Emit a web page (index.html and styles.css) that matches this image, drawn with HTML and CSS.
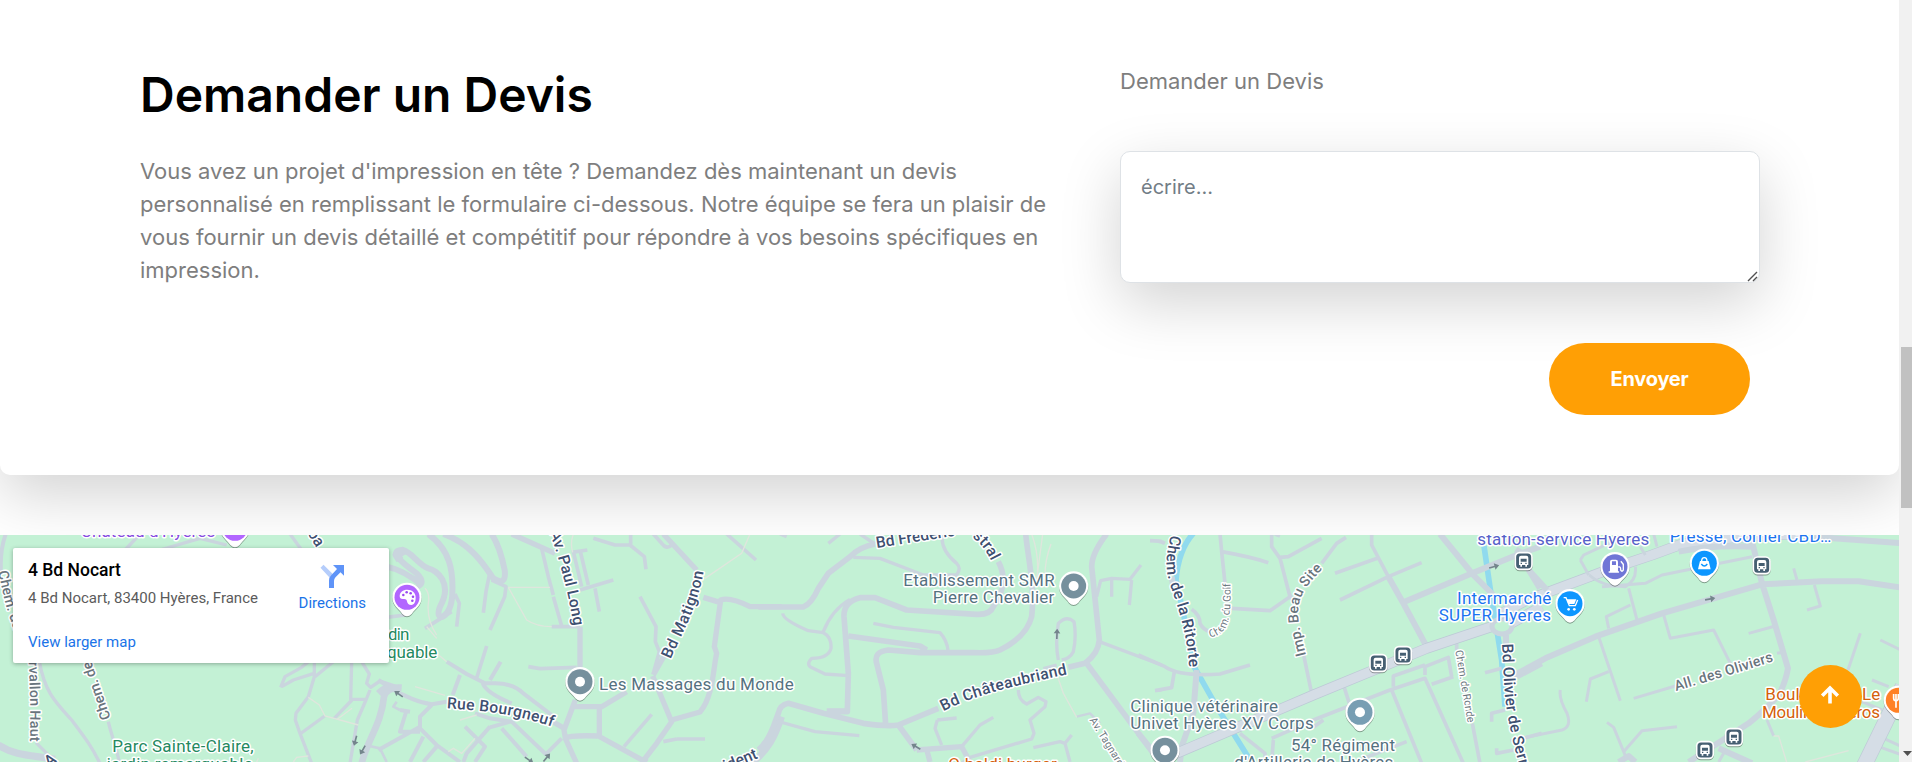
FILE: index.html
```html
<!DOCTYPE html>
<html lang="fr">
<head>
<meta charset="utf-8">
<title>Demander un Devis</title>
<link rel="stylesheet" href="styles.css">
</head>
<body>
<div class="page">
  <main class="content">
    <section class="quote">
      <div class="quote-intro">
        <h2 class="quote-title">Demander un Devis</h2>
        <p class="quote-text">Vous avez un projet d'impression en tête ? Demandez dès maintenant un devis personnalisé en remplissant le formulaire ci-dessous. Notre équipe se fera un plaisir de vous fournir un devis détaillé et compétitif pour répondre à vos besoins spécifiques en impression.</p>
      </div>
      <form class="quote-form">
        <label class="quote-label" for="message">Demander un Devis</label>
        <div class="quote-field">
          <textarea class="quote-input" id="message" placeholder="écrire..."></textarea>
          <svg class="quote-grip" width="11" height="11" viewBox="0 0 11 11"><path d="M1 10L10 1M6 10L10 6" fill="none" stroke="#505050" stroke-width="1.400"/></svg>
        </div>
        <button class="quote-send" type="button">Envoyer</button>
      </form>
    </section>

    <section class="map">
      <svg class="map-canvas" viewBox="0 535 1899 227" width="1899" height="227">
        <defs>
          <g id="pin"><path class="pin-shape" d="M0,-44A44,44 0 0 1 44,0C44,25 26,32 14,50Q0,64 -14,50C-26,32 -44,25 -44,0A44,44 0 0 1 0,-44Z"/><circle r="37.500"/></g>
          <g id="bus"><rect class="bus-frame" x="-25" y="-25" width="50" height="50" rx="13"/><path fill="#fff" fill-rule="evenodd" d="M-14,-10q0,-6 6,-6h16q6,0 6,6v22h-4v5h-5v-5h-10v5h-5v-5h-4zM-9,-7v9h18v-9zM-9,5v4h4v-4zM5,5v4h4v-4z"/></g>
          <g id="way"><path d="M-15,-2.500H2V-10L16,0L2,10V2.500H-15Z"/></g>
          <path id="p-vallon" d="M86,425L91,560L90,670"/>
          <path id="p-chemleft" d="M-6,155C6,200 12,250 42,330"/>
          <path id="p-oa" d="M922,40L960,100"/>
          <path id="p-long" d="M508,38C535,105 565,215 583,330"/>
          <path id="p-matignon" d="M872,418C909,333 957,253 972,145"/>
          <path id="p-bourgneuf" d="M200,565C310,572 400,580 515,620"/>
          <path id="p-mistral1" d="M350,84L580,48"/>
          <path id="p-mistral2" d="M636,52C665,70 680,95 697,130"/>
          <path id="p-chateau" d="M550,574C650,520 800,490 925,462"/>
          <path id="p-tagnard" d="M988,600L1078,745"/>
          <path id="p-ritorte" d="M93,44C80,90 72,140 92,200C125,290 145,370 148,455"/>
          <path id="p-golf" d="M210,352C262,342 275,310 271,183"/>
          <path id="p-beau" d="M498,405C462,265 457,235 555,140"/>
          <path id="p-ronde" d="M946,392L985,620"/>
          <path id="p-olivier" d="M1086,372C1094,500 1085,570 1155,790"/>
          <path id="p-oliviers" d="M492,513C600,480 690,455 795,420"/>
        </defs>

        <rect class="land" x="0" y="535" width="1899" height="227"/>

        <g transform="translate(0 520) scale(.33333)">
          <g class="road">
            <path stroke-width="12" d="M18,40C-8,110 8,150 0,165"/>
            <path stroke-width="10" d="M118,425C135,520 170,550 215,600C260,660 275,680 300,730M325,605C335,650 350,680 358,730"/>
            <path stroke-width="22" d="M-5,675C50,710 100,705 165,718"/>
            <path stroke-width="10" d="M108,668L155,715M375,90L420,42M480,90L600,55L680,75M870,42L905,90"/>
            <path stroke-width="24" d="M1215,90L1190,105L1200,120"/>
            <path stroke-width="10" d="M842,502L855,470L905,442L925,425M845,500L880,480L942,460M943,425V470L925,530L888,580L886,600L900,640L935,730M945,470L1000,425M1055,425L1052,538H1098M1085,425L1108,462L1100,490L1112,502L1140,483L1190,500M1110,510L1098,540L1072,600L1050,730M1056,540L1002,596M974,588L900,642"/>
            <path stroke-width="20" d="M1205,503Q1160,500 1152,530C1145,610 1100,665 1085,730"/>
            <path stroke-width="8" d="M1200,570L1180,560L1190,545M1095,675L1140,685L1160,726"/>
          </g>
          <g class="trail"><path d="M925,532L958,555L975,588L1075,615M1012,598L1056,565M880,726L890,712L925,708M770,726L775,715"/></g>
        </g>

        <g transform="translate(380 520) scale(.33333)">
          <g class="road">
            <path stroke-width="18" d="M145,42C210,90 220,150 217,220C215,300 160,310 180,260C220,190 170,150 145,145C115,135 95,95 68,90C25,90 60,125 110,160Q140,190 110,200M20,140Q70,150 125,195"/>
            <path stroke-width="18" d="M190,42C270,70 310,130 340,175Q380,200 374,150Q360,80 335,42"/>
            <path stroke-width="16" d="M395,42L525,100M600,320V450M586,540L552,630L556,655L590,730M552,655Q570,645 655,648L790,722L830,670L875,605L818,468M820,465L868,380M740,515L665,560H582M658,560V648M875,600L960,576C1000,530 1000,440 1010,400L1003,380L1022,240Q1050,230 1110,260H1205M1022,248L970,232M950,150L850,42M790,726L800,715M552,625L515,603"/>
            <path stroke-width="11" d="M310,130L328,165L318,215L310,278M335,180L378,200L374,230L330,330M320,378L288,480M445,440L480,446L590,442M515,320H600M520,230L545,318M485,85L505,170L520,225M640,55L705,75L750,75L793,110L798,148M752,73V42M700,180L600,210M580,95L605,200M600,90L625,195M575,97L622,90M645,205L658,275M780,230L828,320L826,365L838,395L820,460M820,42L845,70Q860,90 875,75M890,657H975M850,665L890,657M815,583L732,680M1040,42L1128,120M225,222L238,250L230,320M20,292L75,285M135,325L215,275"/>
            <path stroke-width="12" d="M-5,480L25,500Q100,545 155,553L200,545M200,425L260,462L315,490H345Q400,490 430,520L515,585M240,465L218,525M308,490Q320,520 395,550M330,480L362,425M155,555L120,590V620L-5,690M120,625L170,675L240,726M80,570L60,635H120M285,580L330,595L395,605L500,705M330,620L260,700L250,726M365,625L440,710M390,605L330,622M255,620L315,680L285,726M130,650L90,726M500,700L545,655M170,680L130,726M90,575L60,570"/>
            <path stroke-width="20" d="M1205,590C1185,650 1165,690 1115,730M-5,520Q15,500 30,502"/>
          </g>
          <g class="trail"><path d="M580,42Q570,70 578,97M385,202H510M385,202L440,300Q470,320 515,320M975,175L1085,100L1110,42M135,205Q150,220 145,250Q140,300 170,345M170,400L200,425M105,500L195,526M205,695L220,685L245,700L285,655M240,600L290,585M140,320L170,355"/></g>
        </g>

        <g transform="translate(760 520) scale(.33333)">
          <g class="road">
            <path stroke-width="17" d="M-5,261H130Q155,250 175,205L205,160L270,110Q300,80 345,72M715,125Q750,190 700,260Q690,285 650,283L440,270L345,233H300Q250,245 252,290L265,460L262,575H205M797,42C805,120 825,200 815,290Q800,350 720,390Q700,400 640,398H480L385,390Q340,395 350,430L370,510L377,615M1040,42Q995,100 995,140L1018,360Q1015,400 975,430L925,442M980,430L1180,700M535,565L415,615Q380,620 310,610L190,580L85,550Q60,555 55,580L40,620Q20,670 -5,690M415,615L470,690M265,348L480,378L500,390"/>
            <path stroke-width="10" d="M340,310L400,322L540,338Q560,360 564,390M68,280Q70,300 145,332L190,338Q215,350 213,385Q205,415 155,415Q140,430 150,440L195,462L265,467M190,335Q215,270 270,238M280,112L360,115L490,165L590,165Q605,145 590,130Q540,90 547,42M50,603L165,635L298,647M1018,365L1205,435M895,420Q885,370 895,310Q920,285 942,305Q950,350 940,395Q930,415 905,420M1010,230L1022,182L1055,175L1110,178L1143,135M1115,180L1108,255M1055,178V230M850,446L890,435M532,600L590,594M545,675L525,625L532,600M605,680L660,615L700,592M630,712L815,657L822,640L810,600L855,560L858,545L835,532L800,552Q775,540 775,510M820,683L900,665L915,670L930,726M915,670L935,645M630,712L605,730M205,70L240,42M300,42L345,72M60,42L80,50"/>
            <path stroke-width="16" d="M470,690L605,680L630,726M500,688L510,726M200,573H255"/>
            <path stroke-width="7" d="M950,590L990,580L1020,610M1175,62H1205M1185,512H1205"/>
          </g>
          <g class="trail"><path d="M815,42Q840,110 830,180M830,180L848,42M873,72Q855,120 855,165M893,470L910,520L950,592"/></g>
        </g>

        <g transform="translate(1140 520) scale(.33333)">
          <path class="river" d="M160,40Q115,90 108,180L130,280L165,445L230,560L330,720M1032,78L1052,215L1085,420L1095,560"/>
          <g class="road">
            <path stroke-width="11" d="M30,62Q60,62 75,70M-5,405L75,440Q120,470 240,462L330,435M103,455L95,503L45,512M240,42L245,95L255,190M245,95Q330,110 385,128M275,265L390,272L450,230L420,115L395,80V42M420,112L445,110L545,55M450,225L460,250M405,42L420,48M155,268Q180,285 180,310Q190,330 210,335M545,130L590,70L618,52M585,160L712,115M600,240L745,170L845,128M490,400L515,520M612,500L628,550M400,660L395,730M395,655L520,600L750,510L855,475L970,730M755,510L845,730M760,500V468L855,435M855,465V440L925,412L935,470M875,493L940,470M950,370V390M997,610L1020,730M695,42V75L745,170M1055,605V580L1095,570M1035,458L1085,445M1070,685V700L1120,690M1150,655L1205,640M620,735L800,665M-5,405L10,412M300,640L375,700V730M520,622L550,600"/>
            <path stroke-width="18" d="M95,170L100,200M170,450L160,580L125,680L120,726M745,170L790,250L860,380M790,247L1000,158L1130,105L1200,80M900,42L1000,165L1060,225M1130,90L1200,205M1098,345V390M1130,470L1205,430M1140,85L1130,100M-5,640L60,720"/>
          </g>
          <path class="major-edge" d="M110,700L520,525L860,385L1055,320M1095,320L1205,260"/>
          <path class="major" d="M110,700L520,525L860,385L1055,320M1095,320L1205,260"/>
          <ellipse class="roundabout" cx="1086" cy="319" rx="30" ry="23"/>
        </g>

        <g transform="translate(1512 520) scale(.33333)">
          <path class="major-edge" d="M-40,285L45,240L300,145L420,105L510,72Q700,45 870,42"/>
          <path class="major" d="M-40,285L45,240L300,145L420,105L510,72Q700,45 870,42"/>
          <g class="road">
            <path stroke-width="18" d="M-5,472L100,415L250,350L450,280L750,193L930,184H1040L1170,203M500,95Q600,75 720,80M715,42L750,190L785,300L828,445Q820,490 800,525Q760,570 710,610L530,726M900,50L1170,70M620,685L720,730M50,150L105,210M320,726L350,708L370,726"/>
            <path stroke-width="9" d="M205,120L230,165M205,120L215,105L290,70L350,60M232,165Q270,200 340,200Q375,180 370,140M385,80L400,105M425,42L435,80M270,200L400,190L450,165L720,110M350,205L375,300M290,325L283,290L355,255M455,285L475,355L605,330L655,430M260,350L325,542M290,455L235,477L223,545M365,535L490,498M795,400L820,395M845,145L855,180M907,195L925,258L885,270M710,340L790,318M145,510Q140,535 165,580Q180,620 150,630L-5,662M285,607L305,622L335,695L390,632L495,620M335,695L345,720M1105,360L1170,392M1045,340L1008,450M1080,480L1130,500M1050,545L1110,570M1115,655L1170,680M1100,680L1170,705M765,600L785,648M620,726L635,700"/>
          </g>
          <path class="major-edge wide" d="M1172,500L1055,740"/><path class="major wide" d="M1172,500L1055,740"/>
          <g class="trail"><path d="M785,648H800L825,730M880,726L1010,692"/></g>
        </g>

        <g class="ways" transform="scale(.33333)">
          <use href="#way" transform="translate(1196 2082) rotate(215)"/>
          <use href="#way" transform="translate(1066 2222) rotate(105)"/>
          <use href="#way" transform="translate(1088 2250) rotate(120)"/>
          <use href="#way" transform="translate(1640 2273) rotate(-50)"/>
          <use href="#way" transform="translate(1587 2280) rotate(35)"/>
          <use href="#way" transform="translate(2748 2240) rotate(210)"/>
          <use href="#way" transform="translate(3171 1902) rotate(-88)"/>
          <use href="#way" transform="translate(4482 1700) rotate(-15)"/>
          <use href="#way" transform="translate(5130 1797) rotate(-10)"/>
        </g>

        <g class="labels" transform="translate(0 520) scale(.33333)">
          <text class="purple" x="242" y="51" textLength="404">Château d'Hyères</text>
          <text class="green" x="337" y="696" textLength="424">Parc Sainte-Claire,</text>
          <text class="green" x="320" y="749" textLength="438">jardin remarquable</text>
          <text class="green" x="1100" y="360" textLength="128">Jardin</text>
          <text class="green" x="1030" y="414" textLength="282">remarquable</text>
          <text class="minor"><textPath href="#p-chemleft">Chem. du</textPath></text>
          <text class="minor"><textPath href="#p-vallon" textLength="240">rvallon Haut</textPath></text>
          <text class="minor" transform="translate(332 594) rotate(-109)">Chem. de</text>
          <text class="street"><textPath href="#p-oa">oa</textPath></text>
          <text class="street" transform="translate(146 742) rotate(-35)">A</text>
        </g>
        <g class="labels" transform="translate(380 520) scale(.33333)">
          <text x="657" y="511" textLength="584">Les Massages du Monde</text>
          <text class="street"><textPath href="#p-long" textLength="290">Av. Paul Long</textPath></text>
          <text class="street"><textPath href="#p-matignon" textLength="282">Bd Matignon</textPath></text>
          <text class="street"><textPath href="#p-bourgneuf" textLength="323">Rue Bourgneuf</textPath></text>
          <text class="street" text-anchor="end" transform="translate(1135 714) rotate(-22)">Président</text>
        </g>
        <g class="labels" transform="translate(760 520) scale(.33333)">
          <text class="street"><textPath href="#p-mistral1">Bd Frédéric</textPath></text>
          <text class="street"><textPath href="#p-mistral2">stral</textPath></text>
          <text x="430" y="198" textLength="454">Etablissement SMR</text>
          <text x="518" y="250" textLength="365">Pierre Chevalier</text>
          <text class="street"><textPath href="#p-chateau" textLength="389">Bd Châteaubriand</textPath></text>
          <text class="small"><textPath href="#p-tagnard">Av. Tagnard</textPath></text>
          <text class="orange" x="565" y="750" textLength="325">O baldi burger</text>
          <text x="1111" y="575" textLength="443">Clinique vétérinaire</text>
          <text x="1111" y="627" textLength="550">Univet Hyères XV Corps</text>
        </g>
        <g class="labels" transform="translate(1140 520) scale(.33333)">
          <text class="street"><textPath href="#p-ritorte" textLength="408">Chem. de la Ritorte</textPath></text>
          <text class="small"><textPath href="#p-golf" textLength="192">Chem. du Golf</textPath></text>
          <text class="minor"><textPath href="#p-beau" textLength="285">Imp. Beau Site</textPath></text>
          <text class="small"><textPath href="#p-ronde" textLength="220">Chem. de Ronde</textPath></text>
          <text class="street"><textPath href="#p-olivier" textLength="420">Bd Olivier de Serres</textPath></text>
          <text x="453" y="693" textLength="312">54° Régiment</text>
          <text x="283" y="745" textLength="477">d'Artillerie de Hyères</text>
          <text class="indigo" x="1012" y="75" textLength="516">station-service Hyeres</text>
          <text class="blue" x="951" y="251" textLength="283">Intermarché</text>
          <text class="blue" x="896" y="304" textLength="337">SUPER Hyeres</text>
        </g>
        <g class="labels" transform="translate(1512 520) scale(.33333)">
          <text class="blue" x="473" y="67" textLength="485">Presse, Corner CBD…</text>
          <text class="minor"><textPath href="#p-oliviers" textLength="307">All. des Oliviers</textPath></text>
          <text class="orange" x="760" y="541" textLength="345">Boulangerie Le</text>
          <text class="orange" x="750" y="594" textLength="354">Moulin d'Hyèros</text>
        </g>

        <g class="pins" transform="translate(0 520) scale(.33333)">
          <use href="#pin" x="705" y="25" fill="#b266ff"/>
          <use href="#pin" x="1221" y="232" fill="#b266ff"/>
          <path fill="#fff" d="M1222,209c15,0 25,10 25,23c0,14-4,23-13,23c-8,0-12-4-13-11c-1-6-5-8-11-7c-7,1-11-3-11-9c0-11 10-19 23-19z"/>
          <g fill="#9a4af0"><circle cx="1210" cy="225" r="3.800"/><circle cx="1220" cy="217" r="3.800"/><circle cx="1232" cy="220" r="3.800"/><circle cx="1239" cy="230" r="3.800"/><circle cx="1237" cy="242" r="3.800"/></g>
          <use href="#pin" x="1740" y="485" fill="#76909d"/><circle cx="1740" cy="485" r="15" fill="#fff"/>
          <use href="#pin" x="3221" y="198" fill="#76909d"/><circle cx="3221" cy="198" r="15" fill="#fff"/>
          <use href="#pin" x="3495" y="691" fill="#76909d"/><circle cx="3495" cy="691" r="15" fill="#fff"/>
          <use href="#pin" x="4080" y="577" fill="#789eb3"/><circle cx="4080" cy="577" r="15" fill="#fff"/>
          <use href="#pin" x="4845" y="140" fill="#7076d6"/>
          <path fill="#fff" fill-rule="evenodd" d="M4830,154v-29q0-6 6-6h12q6,0 6,6v29h3v4h-31v-4zM4836,124v11h12v-11zM4855,138q9,0 9,9v2q2,4 4,0v-15l-7-9 3-3 8,10v19q-6,10-12,0v-8h-5z"/>
          <use href="#pin" x="4710" y="251" fill="#0d96ff"/>
          <path fill="none" stroke="#fff" stroke-width="4" d="M4691,233h7l10,24h18l7-17"/><path fill="#fff" d="M4700,238h29l-6,14h-18z"/><circle cx="4706" cy="268" r="4" fill="#fff"/><circle cx="4723" cy="268" r="4" fill="#fff"/>
          <use href="#pin" x="5113" y="130" fill="#0d96ff"/>
          <path fill="#fff" d="M5100,123h26l6,25h-38z"/><path fill="none" stroke="#fff" stroke-width="4" d="M5105,124q0-11 8-11t8,11"/><path fill="none" stroke="#0d96ff" stroke-width="4" d="M5104,132q9,12 18,0"/>
          <use href="#pin" x="5695" y="541" fill="#ff8126"/>
          <path fill="none" stroke="#fff" stroke-width="5" d="M5681,522v13q0,7 7,8v20M5695,522v13q0,7-7,8M5688,522v20"/>
          <use href="#bus" x="4135" y="429"/><use href="#bus" x="4209" y="405"/><use href="#bus" x="4571" y="123"/><use href="#bus" x="5285" y="136"/><use href="#bus" x="5202" y="651"/><use href="#bus" x="5115" y="690"/>
        </g>
      </svg>

      <div class="place-card">
        <div class="place-info">
          <strong class="place-name">4 Bd Nocart</strong>
          <span class="place-address">4 Bd Nocart, 83400 Hyères, France</span>
          <a class="place-link">View larger map</a>
        </div>
        <a class="place-directions">
          <svg width="24" height="24" viewBox="0 0 24 24"><path fill="#b5cdfb" d="M.500 3.800L3.500.800L13 10.300L10 14Z"/><path fill="#5f94f8" d="M13 1H24V11.800L20.500 8.300L15.500 13.300Q14 15 14 17V24H9V16.500Q9 13.500 11 11.500L17 4.900Z"/></svg>
          <span>Directions</span>
        </a>
      </div>

      <a class="to-top" aria-label="Haut de page"><svg width="20" height="20" viewBox="0 0 20 20"><path d="M10 18.500V3M2.200 10.800L10 3L17.800 10.800" fill="none" stroke="#fff" stroke-width="3.600"/></svg></a>
    </section>
  </main>
  <div class="scrollbar">
    <div class="scrollbar-thumb"></div>
    <svg class="scrollbar-arrow" width="9" height="5" viewBox="0 0 9 5"><path d="M0 0H9L4.500 5Z" fill="#505050"/></svg>
  </div>
</div>
</body>
</html>
```

FILE: styles.css
```css
* { box-sizing: border-box; }

body {
  margin: 0;
  overflow: hidden;
  background: #fff;
  font-family: Inter, "Liberation Sans", sans-serif;
}

.page { display: flex; width: 1912px; height: 762px; overflow: hidden; }

.content {
  display: flex;
  flex-direction: column;
  gap: 60px;
  width: 1899px;
  overflow: hidden;
}

.quote {
  display: grid;
  grid-template-columns: 920px 640px;
  gap: 60px;
  height: 475px;
  flex: none;
  padding: 63px 139px 0 140px;
  border-radius: 0 0 10px 10px;
  background: #fff;
  box-shadow: 0 20px 60px rgba(0, 0, 0, .175);
}

.quote-title {
  margin: 0 0 28px;
  color: #000;
  font-size: 48px;
  font-weight: 600;
  line-height: 64px;
  white-space: nowrap;
}

.quote-text { margin: 0; color: #7e7e7e; font-size: 22px; line-height: 33px; }

.quote-form { display: flex; flex-direction: column; padding-top: 2px; }
.quote-label { margin-bottom: 53px; color: #7e7e7e; font-size: 22px; line-height: 33px; }

.quote-field { position: relative; }

.quote-input {
  display: block;
  width: 640px;
  height: 132px;
  padding: 20px;
  border: 1px solid #dee2e6;
  border-radius: 10px;
  background: #fff;
  box-shadow: 0 20px 60px rgba(0, 0, 0, .175);
  font: 20px/30px Inter, sans-serif;
  resize: none;
}
.quote-input::placeholder { color: #727d86; opacity: 1; }

.quote-grip { position: absolute; right: 2px; bottom: 1px; }

.quote-send {
  position: relative;
  align-self: flex-end;
  width: 201px;
  height: 72px;
  margin: 60px 10px 0 0;
  border: 0;
  border-radius: 36px;
  background: #ff9f05;
  color: #fff;
  font: 700 20px/30px Inter, sans-serif;
  letter-spacing: -.25px;
}

.map { position: relative; height: 227px; flex: none; overflow: hidden; }
.map-canvas { display: block; }

.land { fill: #c3f1d5; }
.road path { fill: none; stroke: #cad5de; stroke-linejoin: round; }
.trail path { fill: none; stroke: #dfe6dd; stroke-width: 4; }
.river { fill: none; stroke: #90daee; stroke-width: 17; }
.major, .major-edge { fill: none; stroke: #d5dde6; stroke-width: 28; stroke-linejoin: round; }
.major-edge { stroke: #bdc9d6; stroke-width: 32; }
.major.wide { stroke-width: 44; }
.major-edge.wide { stroke-width: 48; }
.roundabout { fill: #c3f1d5; stroke: #cad5de; stroke-width: 15; }
.ways { fill: #74858c; }

.labels text {
  fill: #557180;
  stroke: #fff;
  stroke-width: 9px;
  stroke-linejoin: round;
  paint-order: stroke;
  font-family: Roboto, sans-serif;
  font-size: 51px;
}
.labels .street { fill: #3e5070; font-size: 47px; font-weight: 500; }
.labels .minor { fill: #69757d; font-size: 43px; font-weight: 500; }
.labels .small { fill: #6c7880; font-size: 32px; }
.labels .purple { fill: #8548e0; }
.labels .green { fill: #24895f; }
.labels .indigo { fill: #5661c9; }
.labels .blue { fill: #1b74ef; }
.labels .orange { fill: #d4600b; }

.pin-shape { fill: #fff; filter: drop-shadow(0 3px 2px rgba(0, 0, 0, .35)); }
.bus-frame { fill: #465f72; stroke: #fff; stroke-width: 5; filter: drop-shadow(0 3px 2px rgba(0, 0, 0, .35)); }

.place-card {
  position: absolute;
  top: 13px;
  left: 13px;
  display: flex;
  justify-content: space-between;
  width: 376px;
  height: 115px;
  padding: 9px 23px 0 15px;
  border-radius: 2px;
  background: #fff;
  box-shadow: 0 1px 4px rgba(0, 0, 0, .3);
  font-family: Roboto, sans-serif;
  font-size: 15px;
  line-height: 18px;
}
.place-info { display: flex; flex-direction: column; }
.place-name { color: #000; font-size: 17.5px; font-weight: 500; line-height: 26px; }
.place-address { margin-top: 6px; color: #5b5b5b; }
.place-link { margin-top: 26px; color: #1a73e8; }
.place-directions { display: flex; flex-direction: column; align-items: center; gap: 6px; padding-top: 7px; color: #1a73e8; }
.place-directions svg { margin-right: 1px; }

.to-top {
  position: absolute;
  top: 130px;
  left: 1799px;
  display: flex;
  align-items: center;
  justify-content: center;
  width: 63px;
  height: 63px;
  border-radius: 50%;
  background: #ff9f05;
}
.to-top svg { margin: 0 1px 4px 0; }

.scrollbar {
  display: flex;
  flex-direction: column;
  justify-content: space-between;
  width: 13px;
  padding: 347px 0 6px 2px;
  background: #f1f1f1;
}
.scrollbar-thumb { height: 161px; background: #c1c1c1; }
.scrollbar-arrow { margin-left: 2px; }
```
